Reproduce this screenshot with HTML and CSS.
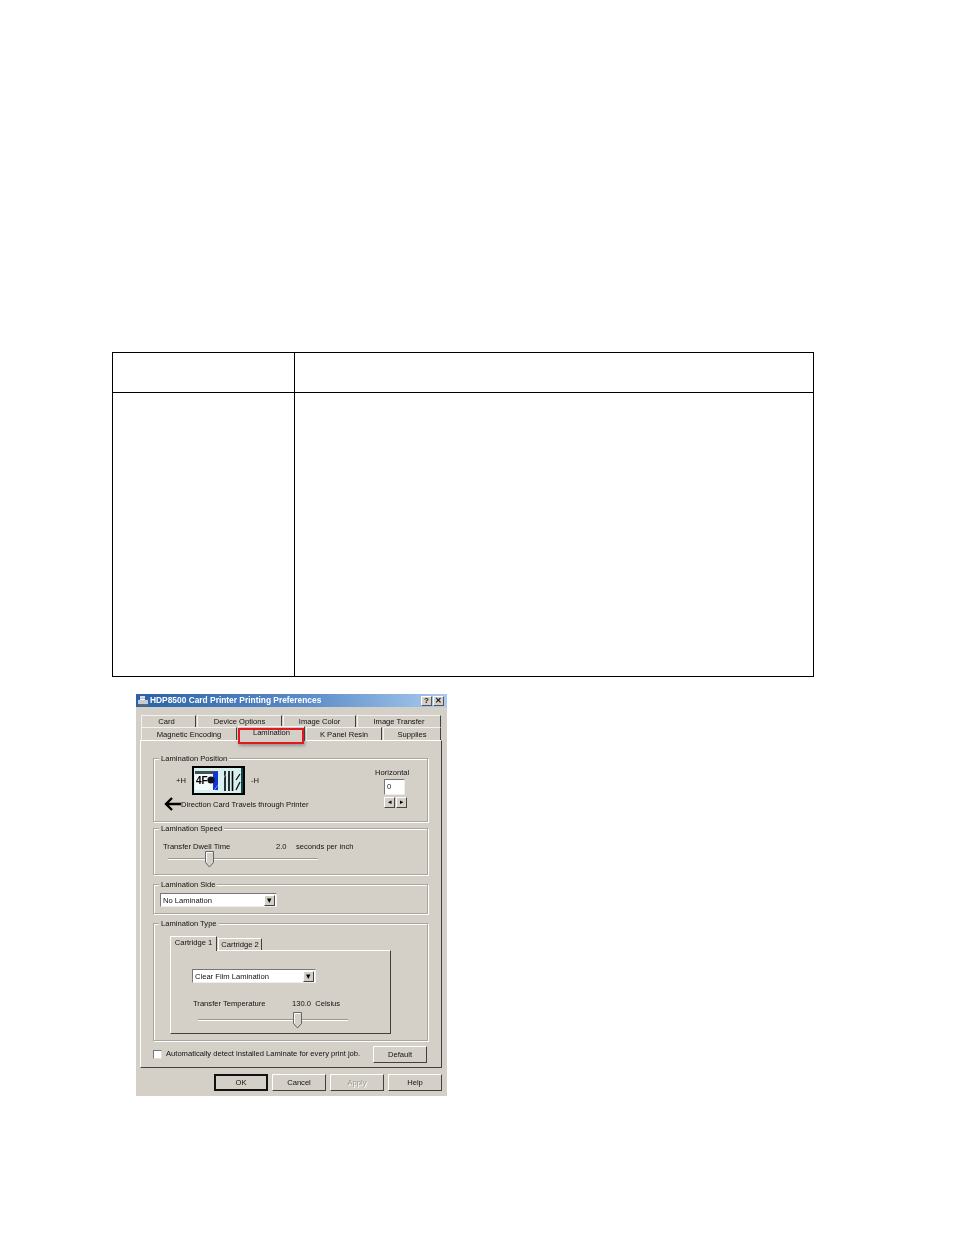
FILE: index.html
```html
<!DOCTYPE html>
<html lang="en">
<head>
<meta charset="utf-8">
<title>HDP8500 Card Printer Printing Preferences</title>
<link rel="stylesheet" href="styles.css">
</head>
<body>
<main class="page">
  <table class="spec">
    <tr class="spec-head"><td class="spec-a"></td><td></td></tr>
    <tr class="spec-body"><td class="spec-a"></td><td></td></tr>
  </table>

  <section class="dialog">
    <header class="titlebar">
      <svg class="printer" width="12" height="12" viewBox="0 0 12 12"><path d="M3 1h5v4H3z" fill="#fff"/><path d="M1 5h10v4H1z" fill="#c8ccd8"/><path d="M1 9h10v2H1z" fill="#606878"/><path d="M3 2h5M3 3.5h5" stroke="#8090a8" stroke-width=".6"/></svg>
      <span class="title-text">HDP8500 Card Printer Printing Preferences</span>
      <span class="cap-btn cap-help">?</span>
      <span class="cap-btn cap-close">✕</span>
    </header>

    <div class="tabs tabs-top">
      <span class="tab t-card">Card</span>
      <span class="tab t-device">Device Options</span>
      <span class="tab t-color">Image Color</span>
      <span class="tab t-transfer">Image Transfer</span>
    </div>
    <div class="tabs tabs-bottom">
      <span class="tab t-mag">Magnetic Encoding</span>
      <span class="tab t-lam">Lamination</span>
      <span class="tab t-panel">K Panel Resin</span>
      <span class="tab t-sup">Supplies</span>
    </div>

    <div class="panel">
      <div class="red-box"></div>

      <div class="group g-position">
        <span class="legend">Lamination Position</span>
        <div class="pos-row">
          <div class="pos-left">
            <div class="thumb-row">
              <span class="h-label">+H</span>
              <svg class="thumb" width="53" height="29" viewBox="0 0 53 29">
                <rect width="53" height="29" fill="#000"/>
                <rect x="2" y="2" width="49" height="25" fill="#d8f0f0"/>
                <rect x="3" y="5" width="23" height="19" fill="#f4fbfb"/>
                <rect x="3" y="5" width="23" height="3" fill="#405058"/>
                <text class="thumb-text" x="4" y="18">4F</text>
                <rect x="21" y="6" width="5" height="18" fill="#1034d8"/>
                <circle cx="19" cy="14" r="3.6" fill="#101418"/>
                <path d="M33 5v20M37 5v20M40.500 5v20" stroke="#000" stroke-width="1.600"/>
                <path d="M44 24l4-8M44 14l4-6" stroke="#101010" stroke-width="1.300"/>
                <rect x="49" y="2" width="2" height="25" fill="#104850"/>
                <path d="M20 27L36 6" stroke="#fff" stroke-width=".7" opacity=".7"/>
              </svg>
              <span>-H</span>
            </div>
            <div class="dir-row">
              <svg width="17" height="14" viewBox="0 0 17 14"><path d="M17 7H3M8 1L2 7l6 6" fill="none" stroke="#000" stroke-width="2.400"/></svg>
              <span>Direction Card Travels through Printer</span>
            </div>
          </div>
          <div class="pos-right">
            <span>Horizontal</span>
            <span class="spin-input">0</span>
            <div class="spin-btns"><span class="spin-btn">◂</span><span class="spin-btn">▸</span></div>
          </div>
        </div>
      </div>

      <div class="group g-speed">
        <span class="legend">Lamination Speed</span>
        <div class="value-row">
          <span class="v-label-a">Transfer Dwell Time</span>
          <span class="v-num-a">2.0</span>
          <span>seconds per inch</span>
        </div>
        <div class="slider slider-a">
          <svg class="knob knob-a" width="9" height="17" viewBox="0 0 9 17"><path d="M.5.5h8v11l-4 4.500-4-4.500z" fill="#d4d0c8" stroke="#666"/><path d="M1.500 11V1.500h6" fill="none" stroke="#fff"/></svg>
        </div>
      </div>

      <div class="group g-side">
        <span class="legend">Lamination Side</span>
        <div class="combo combo-a"><span class="combo-text">No Lamination</span><span class="combo-arrow">▾</span></div>
      </div>

      <div class="group g-type">
        <span class="legend">Lamination Type</span>
        <div class="inner-tabs">
          <span class="itab itab-on">Cartridge 1</span>
          <span class="itab itab-off">Cartridge 2</span>
        </div>
        <div class="inner-panel">
          <div class="combo combo-b"><span class="combo-text">Clear Film Lamination</span><span class="combo-arrow">▾</span></div>
          <div class="value-row value-b">
            <span class="v-label-b">Transfer Temperature</span>
            <span>130.0&nbsp; Celsius</span>
          </div>
          <div class="slider slider-b">
            <svg class="knob knob-b" width="9" height="17" viewBox="0 0 9 17"><path d="M.5.5h8v11l-4 4.500-4-4.500z" fill="#d4d0c8" stroke="#666"/><path d="M1.500 11V1.500h6" fill="none" stroke="#fff"/></svg>
          </div>
        </div>
      </div>

      <div class="auto-row">
        <span class="check"></span>
        <span class="auto-text">Automatically detect installed Laminate for every print job.</span>
        <span class="btn btn-default">Default</span>
      </div>
    </div>

    <footer class="actions">
      <span class="btn btn-ok">OK</span>
      <span class="btn">Cancel</span>
      <span class="btn btn-off">Apply</span>
      <span class="btn">Help</span>
    </footer>
  </section>
</main>
</body>
</html>
```
FILE: styles.css
```css
* { box-sizing: border-box; }
html, body { margin: 0; padding: 0; background: #fff; }
.page { width: 954px; height: 1235px; padding: 352px 0 0 112px; overflow: hidden; }

.spec { width: 702px; height: 325px; border-collapse: collapse; table-layout: fixed; }
.spec td { border: 1px solid #000; padding: 0; }
.spec-a { width: 182px; }
.spec-head { height: 40px; }

.dialog {
  width: 311px; height: 402px; margin: 17px 0 0 24px;
  background: #d4d0c8; color: #111;
  font: 7.6px/11px "Liberation Sans", Arial, sans-serif;
  filter: blur(.3px);
}
.titlebar {
  height: 13px; display: flex; align-items: center; padding: 0 3px 0 1px;
  background: linear-gradient(90deg, #2a62a8, #5c8cc8 55%, #a8cbee);
}
.printer { flex: none; }
.title-text { margin-left: 1px; flex: 1; color: #fff; font: 700 8.4px/11px "Liberation Sans", Arial, sans-serif; white-space: nowrap; }
.cap-btn {
  width: 11px; height: 10px; margin-left: 1px; background: #d4d0c8; color: #111;
  border: 1px solid; border-color: #fff #555 #555 #fff;
  font: 700 8px/8px "Liberation Sans", sans-serif; text-align: center;
}

.tabs { display: flex; margin-left: 5px; gap: 1px; white-space: nowrap; }
.tabs-top { margin-top: 8px; height: 12px; }
.tabs-bottom { height: 13px; }
.tab { display: block; text-align: center; border-top: 1px solid #f4f2ee; border-left: 1px solid #f4f2ee; border-right: 1px solid #404040; line-height: 11px; }
.tabs-bottom .tab { line-height: 13px; }
.t-card { width: 55px; padding-right: 4px; }
.t-device { width: 85px; }
.t-color { width: 73px; }
.t-transfer { width: 84px; }
.t-mag { width: 96px; }
.tabs-bottom .t-lam { width: 67px; height: 15px; line-height: 12px; margin-top: -1px; position: relative; z-index: 2; background: #d4d0c8; }
.t-panel { width: 76px; }
.t-sup { width: 58px; }

.panel {
  position: relative; width: 302px; height: 328px; margin-left: 4px; padding: 17px 0 0 12px;
  border: 1px solid; border-color: #fff #404040 #404040 #fff;
}
.red-box {
  position: absolute; left: 97px; top: -13px; width: 66px; height: 16px; z-index: 3;
  border: 2px solid #e01820; box-shadow: 1px 2px 3px rgba(60,60,60,.4);
}

.group {
  width: 275px; border: 1px solid #a8a69f; box-shadow: inset 1px 1px 0 #fff, 1px 1px 0 #fff;
}
.legend { display: table; margin: -6px 0 0 5px; padding: 0 2px; background: #d4d0c8; height: 11px; white-space: nowrap; }

.g-position { height: 64px; }
.pos-row { display: flex; justify-content: space-between; padding: 2px 18px 0 22px; }
.thumb-row { display: flex; align-items: center; gap: 6px; height: 29px; }
.h-label { width: 10px; }
.thumb { flex: none; }
.thumb-text { font: 700 10px "Liberation Sans", sans-serif; fill: #000; }
.dir-row { display: flex; align-items: center; margin: 2px 0 0 -12px; height: 14px; white-space: nowrap; }
.pos-right { display: flex; flex-direction: column; align-items: flex-start; width: 34px; padding-top: 1px; white-space: nowrap; }
.spin-input { width: 21px; height: 16px; margin: 1px 0 0 9px; padding-left: 2px; background: #fff; border: 1px solid; border-color: #777 #eee #eee #777; line-height: 14px; }
.spin-btns { display: flex; gap: 1px; margin: 2px 0 0 9px; }
.spin-btn { width: 11px; height: 11px; border: 1px solid; border-color: #fff #444 #444 #fff; font-size: 7px; line-height: 8px; text-align: center; color: #000; }

.g-speed { height: 47px; margin-top: 6px; }
.value-row { display: flex; white-space: nowrap; }
.g-speed .value-row { padding: 7px 0 0 9px; }
.v-label-a { width: 113px; }
.v-num-a { width: 20px; }
.slider { position: relative; height: 2px; background: #9a988f; border-bottom: 1px solid #fff; }
.slider-a { width: 150px; margin: 6px 0 0 14px; }
.knob { position: absolute; top: -7px; }
.knob-a { left: 37px; }
.knob-b { left: 95px; }

.g-side { height: 30px; margin-top: 9px; }
.combo { display: flex; justify-content: space-between; align-items: center; background: #fff; border: 1px solid; border-color: #777 #eee #eee #777; height: 14px; padding: 0 1px 0 2px; white-space: nowrap; }
.combo-a { width: 117px; margin: 3px 0 0 6px; }
.combo-arrow { width: 11px; height: 11px; background: #d4d0c8; border: 1px solid; border-color: #fff #444 #444 #fff; color: #000; font-size: 9px; line-height: 8px; text-align: center; }

.g-type { height: 118px; margin-top: 9px; }
.inner-tabs { display: flex; align-items: flex-end; margin: 7px 0 0 16px; height: 14px; }
.itab { display: block; text-align: center; border-top: 1px solid #fff; border-left: 1px solid #fff; border-right: 1px solid #404040; white-space: nowrap; }
.itab-on { width: 47px; height: 15px; line-height: 12px; position: relative; z-index: 1; background: #d4d0c8; margin-bottom: -1px; }
.itab-off { width: 44px; height: 12px; margin-left: 1px; }
.inner-panel { width: 221px; height: 84px; margin-left: 16px; padding: 18px 0 0 21px; border: 1px solid; border-color: #fff #404040 #404040 #fff; }
.combo-b { width: 124px; }
.value-b { margin: 15px 0 0 1px; }
.v-label-b { width: 99px; }
.slider-b { width: 150px; margin: 10px 0 0 6px; }

.auto-row { display: flex; align-items: flex-start; margin-top: 5px; white-space: nowrap; }
.check { flex: none; width: 9px; height: 9px; margin-top: 4px; background: #fff; border: 1px solid; border-color: #777 #ddd #ddd #777; }
.auto-text { width: 207px; margin-left: 4px; margin-top: 2px; }
.btn { display: block; flex: none; width: 54px; height: 17px; text-align: center; line-height: 15px; border: 1px solid; border-color: #fff #404040 #404040 #fff; }

.actions { display: flex; justify-content: flex-end; gap: 4px; padding: 6px 5px 0 0; }
.btn-ok { border: 2px solid #111; line-height: 13px; }
.btn-off { color: #9a988f; text-shadow: 1px 1px 0 #fff; }
```
